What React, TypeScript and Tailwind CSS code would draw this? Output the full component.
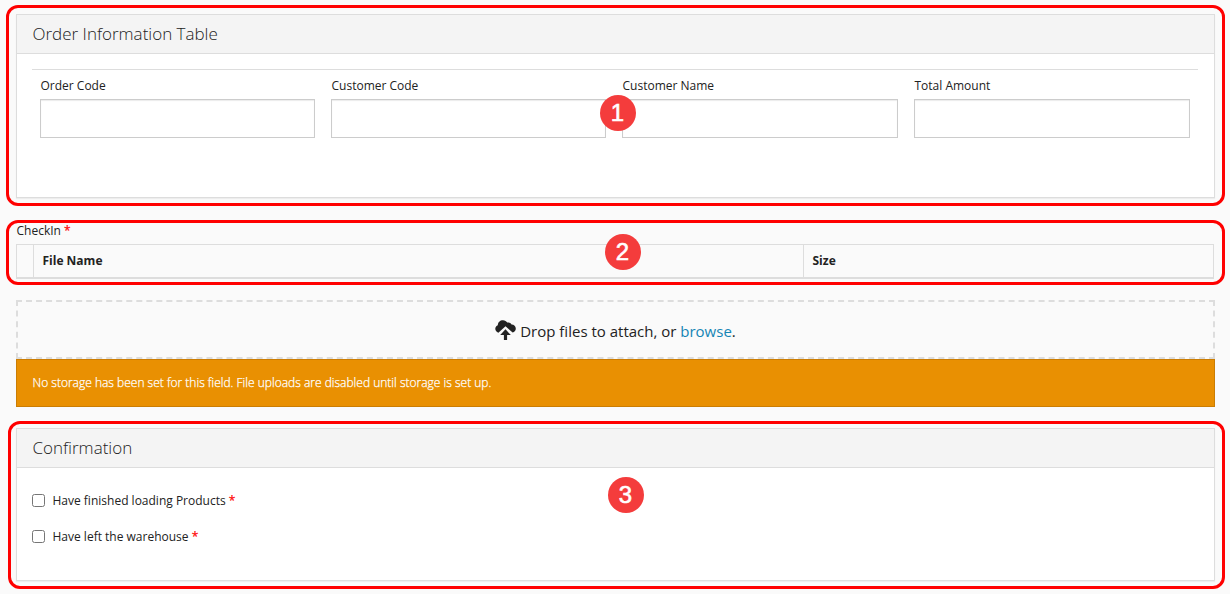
import type { ReactNode } from "react";

const fields = ["Order Code", "Customer Code", "Customer Name", "Total Amount"];
const checks = ["Have finished loading Products", "Have left the warehouse"];

function Panel({ title, children, className }: { title: string; children: ReactNode; className: string }) {
  return (
    <section className={`flex flex-col border border-[#dddddd] bg-white shadow-[0_1px_1px_rgba(0,0,0,0.05)] ${className}`}>
      <h2 className="h-[39px] shrink-0 border-b border-[#dddddd] bg-[#f4f4f4] pl-[15.5px] text-[17px] leading-[38px] font-light text-[#222222]">
        {title}
      </h2>
      {children}
    </section>
  );
}

function Badge({ n, className }: { n: number; className: string }) {
  return (
    <div
      className={`absolute flex size-9 items-center justify-center rounded-full bg-[#f43c3c] font-['Liberation_Sans',sans-serif] text-[24px] leading-none text-white [-webkit-text-stroke:0.6px_white] ${className}`}
    >
      {n}
    </div>
  );
}

function Required() {
  return <span className="text-[#ff0000] [-webkit-text-stroke:0.2px_#ff0000]">*</span>;
}

export default function App() {
  return (
    <main className="relative h-[594px] w-[1230px] overflow-hidden bg-[#fafafa] pt-[14px] pr-[15px] pl-4 font-['Open_Sans',sans-serif] text-[12px] text-[#222222]">
      <Panel title="Order Information Table" className="h-[184px]">
        <div className="mt-[15px] mr-4 ml-[15px] grid grid-cols-[291px_291px_292px_292px] border-t border-[#dddddd]">
          {fields.map((f) => (
            <label key={f} className="block px-2 pt-[7px] leading-[18px]">
              <span className="pl-[0.5px]">{f}</span>
              <input className="mt-1 block h-[39px] w-full border border-[#cccccc] bg-white shadow-[inset_0_1px_1px_rgba(0,0,0,0.08)] outline-none" />
            </label>
          ))}
        </div>
      </Panel>

      <section className="mt-[23px]">
        <div className="h-[23px] pl-[0.5px] leading-[20px]">
          CheckIn <Required />
        </div>
        <div className="mr-px flex h-[35px] border border-b-2 border-[#dddddd] leading-[32px] font-bold">
          <div className="w-[17px] border-r border-[#dddddd]" />
          <div className="w-[770px] border-r border-[#dddddd] pl-[8.5px]">File Name</div>
          <div className="pl-[8.5px]">Size</div>
        </div>
      </section>

      <div className="mt-[21px] flex h-[59px] items-center justify-center border-2 border-dashed border-[#dddddd] text-[15px]">
        <svg viewBox="0 0 21 20" className="mr-1 h-5 w-[21px]">
          <path
            d="M3.4 12.8C1.2 12 .2 10.4.3 8.6.4 6.8 1.5 5.7 2.8 5.2 2.9 2.2 5 .2 8 .2c1.9 0 3.4.9 4.300 2.400 1.700-.5 3.500.2 4.300 1.900 2.500.1 4.200 1.700 4.200 4 0 2-1.200 3.500-3.200 4.100L10.500 6.200Z"
            fill="#222222"
          />
          <path d="m10.5 9.3 5.3 5.7h-3.7v5H8.9v-5H5.2Z" fill="#222222" />
        </svg>
        <span className="pt-[3px]">
          Drop files to attach, or <span className="text-[#1585b5]">browse</span>.
        </span>
      </div>

      <div className="h-12 border border-[#cb7d03] bg-[#e99002] pl-[15.5px] leading-[46px] font-light text-white [-webkit-text-stroke:0.25px_white]">
        No storage has been set for this field. File uploads are disabled until storage is set up.
      </div>

      <Panel title="Confirmation" className="mt-[21px] h-[153px]">
        <div className="flex flex-col gap-[18px] pt-6 pl-[15px]">
          {checks.map((c) => (
            <label key={c} className="flex h-[18px] items-start leading-[18px]">
              <input type="checkbox" className="mt-[2px] mr-[7.5px] size-[13px]" />
              <span>
                {c} <Required />
              </span>
            </label>
          ))}
        </div>
      </Panel>

      <div className="absolute top-[5px] left-[6px] h-[201px] w-[1219px] rounded-[12px] border-[3px] border-[#ff0000]" />
      <div className="absolute top-[220px] left-[6px] h-[65px] w-[1219px] rounded-[12px] border-[3px] border-[#ff0000]" />
      <div className="absolute top-[421px] left-[8px] h-[168px] w-[1217px] rounded-[12px] border-[3px] border-[#ff0000]" />
      <Badge n={1} className="top-[94.5px] left-[599.5px]" />
      <Badge n={2} className="top-[233.5px] left-[604.5px]" />
      <Badge n={3} className="top-[476.5px] left-[607.5px]" />
    </main>
  );
}
